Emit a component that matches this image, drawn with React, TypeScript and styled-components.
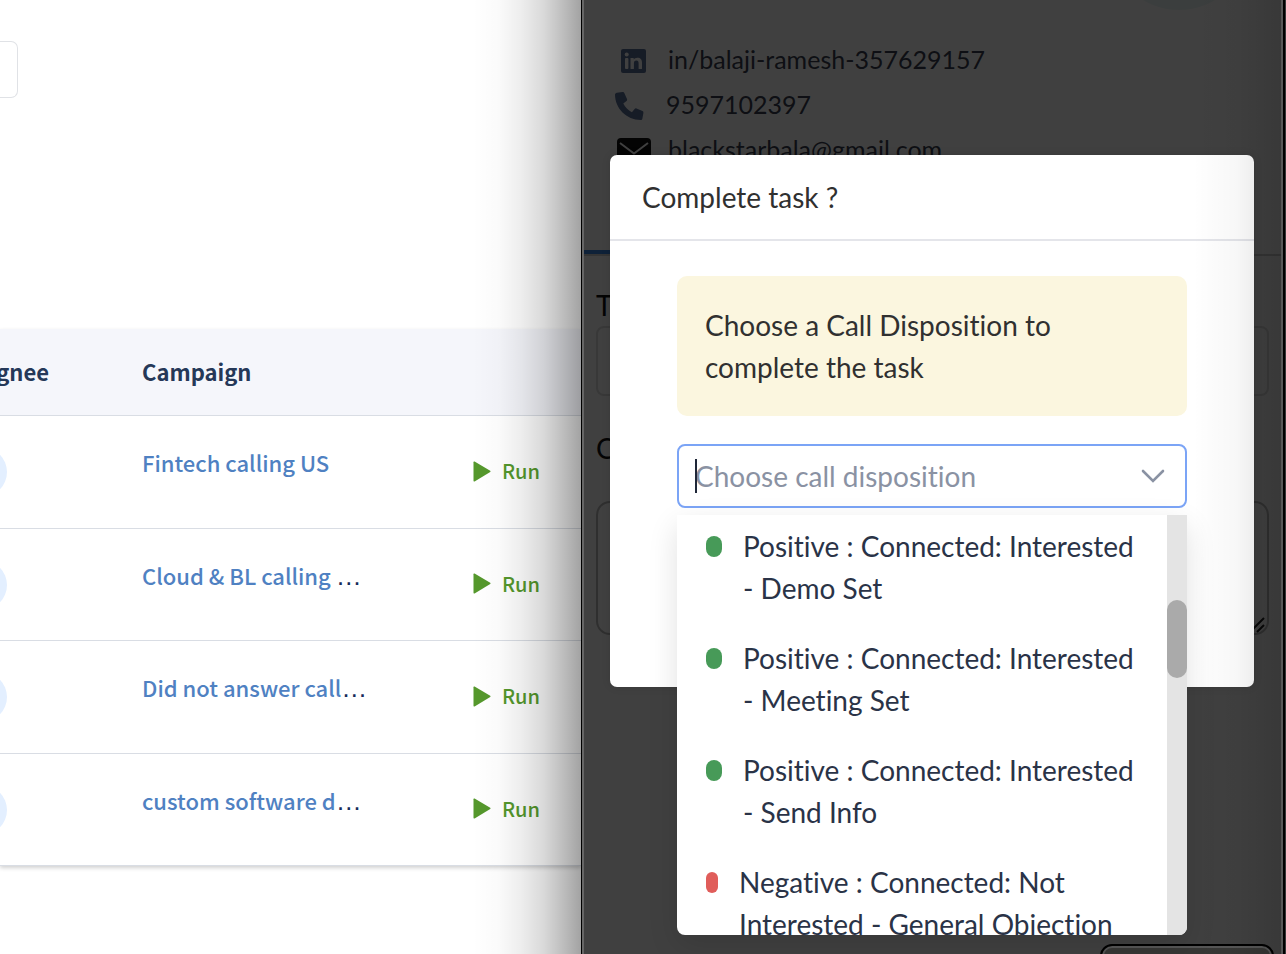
import React from 'react';
import styled, { createGlobalStyle } from 'styled-components';

const GlobalStyle = createGlobalStyle`
  * { box-sizing: border-box; }
  body { margin: 0; background: #fff; }
`;

const tableFont = '"Noto Sans CJK SC", "Noto Sans", sans-serif';
const panelFont = 'Lato, sans-serif';

const Page = styled.div`
  display: grid;
  grid-template-columns: minmax(0, 1fr) 702px 3px;
  height: 100vh;
  overflow: hidden;
`;

const Main = styled.main`
  padding-top: 41px;
  font-family: ${tableFont};
`;

const FilterButton = styled.button`
  display: block;
  width: 18px;
  height: 57px;
  margin: 0 0 231px;
  padding: 0;
  border: 1px solid #e0e2e6;
  border-left: 0;
  border-radius: 0 7px 7px 0;
  background: #fff;
`;

const TaskTable = styled.table`
  width: 100%;
  height: 537px;
  table-layout: fixed;
  border-collapse: separate;
  border-spacing: 0;
  box-shadow: 0 2px 4px rgba(0, 0, 0, 0.18);
`;

const HeadCell = styled.th<{ $width?: number }>`
  width: ${(p) => (p.$width ? `${p.$width}px` : 'auto')};
  height: 87px;
  padding: 0 0 2px;
  border-bottom: 1px solid #d9dde4;
  background: #f5f6fb;
  color: #253858;
  font-size: 22px;
  font-weight: 700;
  line-height: 32px;
  text-align: left;
`;

const Cell = styled.td`
  padding: 0;
  border-bottom: 1px solid #d9dde4;
  background: #fff;
  vertical-align: top;
`;

const CutLeft = styled.div<{ $width: number }>`
  display: flex;
  justify-content: flex-end;
  width: ${(p) => p.$width}px;
  overflow: hidden;
`;

const Avatar = styled.span`
  flex: none;
  width: 50px;
  height: 50px;
  margin-top: 31px;
  border-radius: 50%;
  background: #e3efff;
`;

const CampaignLink = styled.a`
  display: block;
  margin-top: 30px;
  color: #4f81c2;
  font-size: 22px;
  font-weight: 500;
  line-height: 32px;
  text-decoration: none;
  white-space: nowrap;
`;

const Ellipsis = styled.span`
  color: #172b5a;
  font-family: 'Liberation Sans', sans-serif;
  font-size: 26px;
`;

const RunButton = styled.button`
  display: flex;
  align-items: center;
  gap: 11px;
  margin: 39px 0 0;
  padding: 0;
  border: 0;
  background: none;
  color: #55982c;
  font-family: ${tableFont};
  font-size: 20px;
  font-weight: 500;
  line-height: 32px;
`;

const Panel = styled.aside`
  position: relative;
  border-left: 1px solid #000;
  background: #fff;
  font-family: ${panelFont};
  font-variant-ligatures: none;
`;

const CastShadow = styled.div`
  position: absolute;
  top: 0;
  bottom: 0;
  right: 100%;
  width: 110px;
  background: linear-gradient(
    to right,
    rgba(0, 0, 0, 0),
    rgba(0, 0, 0, 0.02) 25%,
    rgba(0, 0, 0, 0.07) 45%,
    rgba(0, 0, 0, 0.15) 65%,
    rgba(0, 0, 0, 0.27) 85%,
    rgba(0, 0, 0, 0.37)
  );
  pointer-events: none;
`;

const Contacts = styled.ul`
  display: flex;
  flex-direction: column;
  gap: 11px;
  height: 256px;
  margin: 0;
  padding: 42px 0 0 33px;
  border-bottom: 2px solid #d0d0d0;
  list-style: none;
`;

const Contact = styled.li`
  display: flex;
  align-items: center;
  gap: 16px;
  height: 34px;
  color: #3a3f50;
  font-size: 25px;
  line-height: 34px;

  svg {
    flex: none;
    margin-top: 4px;
  }
`;

const ContactLink = styled.a`
  color: inherit;
  text-decoration: none;
`;

const ActiveTab = styled.div`
  width: 190px;
  height: 4px;
  margin-top: -6px;
  background: #3b82e0;
`;

const Field = styled.label`
  display: block;
  padding: 0 14px;
  color: #111;
  font-size: 28px;
  line-height: 42px;
`;

const NoteForm = styled.form`
  display: grid;
  gap: 31px;
  padding-top: 30px;
`;

const TitleInput = styled.input`
  display: block;
  width: 100%;
  height: 70px;
  border: 2px solid #ddd;
  border-radius: 8px;
  background: #fff;
`;

const NoteArea = styled.textarea`
  display: block;
  width: 100%;
  height: 134px;
  margin-top: 32px;
  border: 2px solid #bbb;
  border-radius: 14px;
  background: #fff;
  resize: none;
`;

const ResizeMark = styled.svg`
  position: absolute;
  top: 615px;
  right: 18px;
`;

const ProfileCircle = styled.div`
  position: absolute;
  top: -130px;
  right: 34px;
  width: 140px;
  height: 140px;
  border-radius: 50%;
  background: #ecf8f6;
`;

const Backdrop = styled.div`
  position: absolute;
  inset: 0;
  background: rgba(0, 0, 0, 0.75);
  box-shadow: inset 2px 0 0 #666;
`;

const EdgeShade = styled.div`
  position: absolute;
  inset: 0 0 0 auto;
  width: 90px;
  border-right: 2px solid #585858;
  background: linear-gradient(to right, rgba(0, 0, 0, 0), rgba(0, 0, 0, 0.03) 50%, rgba(0, 0, 0, 0.12));
  pointer-events: none;
`;

const RightEdge = styled.div`
  position: relative;
  border-left: 2px solid #000;
  background: #383838;
`;

const Dialog = styled.section`
  position: absolute;
  top: 155px;
  left: 28px;
  right: 29px;
  height: 532px;
  border-radius: 7px;
  background: #fff;
  box-shadow: 0 0 8px rgba(0, 0, 0, 0.12);
  color: #303030;
  font-size: 28px;
  line-height: 42px;
`;

const DialogTitle = styled.h2`
  margin: 0;
  padding: 21px 32px;
  border-bottom: 2px solid #e4e5ea;
  font-size: 28px;
  font-weight: 400;
  line-height: 42px;
`;

const DialogBody = styled.div`
  display: grid;
  gap: 28px;
  padding: 35px 67px;
`;

const Notice = styled.p`
  margin: 0;
  padding: 28px;
  border-radius: 10px;
  background: #fbf6df;
`;

const Combo = styled.div`
  position: relative;
  display: flex;
  align-items: center;
  height: 64px;
  padding: 0 20px 0 16px;
  border: 2px solid #7ba4f6;
  border-radius: 8px;
  background: #fff;
`;

const ComboInput = styled.input`
  flex: 1;
  min-width: 0;
  padding: 0;
  border: 0;
  outline: 0;
  background: none;
  color: #2d3748;
  font-family: ${panelFont};
  font-size: 28px;
  line-height: 42px;
  font-variant-ligatures: none;

  &::placeholder { color: #8a92a3; opacity: 1; }
`;

const Caret = styled.span`
  position: absolute;
  top: 13px;
  left: 16px;
  width: 2px;
  height: 34px;
  background: #1f2738;
`;

const Menu = styled.div`
  position: absolute;
  top: 69px;
  left: -2px;
  right: -2px;
  display: flex;
  height: 420px;
  overflow: hidden;
  border-radius: 0 0 8px 8px;
  background: #fff;
`;

const MenuShadow = styled.div`
  position: absolute;
  top: 69px;
  left: -2px;
  right: -2px;
  height: 420px;
  border-radius: 8px;
  box-shadow: 0 10px 30px rgba(0, 0, 0, 0.12);
`;

const Options = styled.ul`
  display: flex;
  flex: 1;
  flex-direction: column;
  gap: 28px;
  margin: 0;
  padding: 10px 28px;
  list-style: none;
`;

const Option = styled.li`
  display: flex;
  flex: none;
  gap: 21px;
  color: #2a3347;
`;

const Dot = styled.span<{ $tone: 'good' | 'bad' }>`
  flex: none;
  width: ${(p) => (p.$tone === 'good' ? 16 : 12)}px;
  height: 21px;
  margin: 11px 0 0 1px;
  border-radius: 8px;
  background: ${(p) => (p.$tone === 'good' ? '#479a58' : '#e05d5a')};
`;

const ScrollTrack = styled.div`
  flex: none;
  width: 20px;
  padding-top: 85px;
  background: #e4e4e4;
`;

const ScrollThumb = styled.div`
  height: 78px;
  border-radius: 10px;
  background: #aaa;
`;

const CornerButton = styled.button`
  position: absolute;
  top: 944px;
  right: 9px;
  width: 174px;
  height: 60px;
  border: 2px solid #000;
  border-radius: 12px;
  background: #373735;
  box-shadow: inset 0 0 0 2px #565656;
`;

const campaigns = [
  { name: 'Fintech calling US', cut: false },
  { name: 'Cloud & BL calling ', cut: true },
  { name: 'Did not answer call', cut: true },
  { name: 'custom software d', cut: true },
];

const dispositions: { text: string; tone: 'good' | 'bad' }[] = [
  { text: 'Positive : Connected: Interested - Demo Set', tone: 'good' },
  { text: 'Positive : Connected: Interested - Meeting Set', tone: 'good' },
  { text: 'Positive : Connected: Interested - Send Info', tone: 'good' },
  { text: 'Negative : Connected: Not Interested - General Objection', tone: 'bad' },
];

export default function App() {
  return (
    <>
      <GlobalStyle />
      <Page>
        <Main>
          <FilterButton type="button" />
          <TaskTable>
            <thead>
              <tr>
                <HeadCell $width={142}>
                  <CutLeft $width={49}>Assignee</CutLeft>
                </HeadCell>
                <HeadCell $width={331}>Campaign</HeadCell>
                <HeadCell />
              </tr>
            </thead>
            <tbody>
              {campaigns.map((c) => (
                <tr key={c.name}>
                  <Cell>
                    <CutLeft $width={7}>
                      <Avatar />
                    </CutLeft>
                  </Cell>
                  <Cell>
                    <CampaignLink href="#">
                      {c.name}
                      {c.cut && <Ellipsis>…</Ellipsis>}
                    </CampaignLink>
                  </Cell>
                  <Cell>
                    <RunButton type="button">
                      <svg width="18" height="21" viewBox="0 0 18 21" fill="currentColor">
                        <path d="M0.5 1.2Q0.5 0 1.6 0.6L17.2 9.8Q18 10.4 17.2 11L1.6 20.4Q0.5 21 0.5 19.8Z" />
                      </svg>
                      Run
                    </RunButton>
                  </Cell>
                </tr>
              ))}
            </tbody>
          </TaskTable>
        </Main>

        <Panel>
          <CastShadow />
          <ProfileCircle />
          <Contacts>
            <Contact>
              <svg width="37" height="26" viewBox="0 0 37 26">
                <rect x="6" y="1" width="25" height="24" rx="2" fill="#5a7096" />
                <g fill="#fff">
                  <rect x="10" y="10" width="3.4" height="11" rx="1" />
                  <circle cx="11.7" cy="6.500" r="2" />
                  <path d="M15.500 10h3.200v1.600c.7-1.200 2-1.900 3.600-1.900 3.400 0 4.700 2 4.700 5V20.500q0 .5-.5.5H24q-.4 0-.4-.5v-5.100c0-1.700-.4-2.900-2.200-2.900-1.900 0-2.500 1.300-2.500 2.900V20.500q0 .5-.5.5H16q-.5 0-.5-.5z" />
                </g>
              </svg>
              <ContactLink href="#">in/balaji-ramesh-357629157</ContactLink>
            </Contact>
            <Contact>
              <svg width="35" height="28" viewBox="0 0 35 28">
                <path
                  d="M1.800.8 7.500 0c.8-.1 1.500.3 1.800 1l2.700 6c.3.700.1 1.400-.5 1.900L8.300 11.600c2 4 4.700 6.700 8.600 8.600l2.700-3.300c.5-.6 1.200-.8 1.900-.5l6 2.700c.7.300 1 1 .9 1.800l-1 5.500c-.2.900-.8 1.600-1.700 1.600C11.500 28 0 16.500 0 2.600c0-.9.800-1.600 1.800-1.800z"
                  fill="#5a7096"
                />
              </svg>
              <ContactLink href="#">9597102397</ContactLink>
            </Contact>
            <Contact>
              <svg width="37" height="27" viewBox="0 0 37 27">
                <rect x="2" width="34" height="27" rx="4" fill="#111" />
                <path d="M5 5l14 10.500L33 5" fill="none" stroke="#fff" strokeWidth="2" />
              </svg>
              <ContactLink href="#">blackstarbala@gmail.com</ContactLink>
            </Contact>
          </Contacts>
          <ActiveTab />
          <NoteForm>
            <Field>
              T
              <TitleInput type="text" />
            </Field>
            <Field>
              C
              <NoteArea />
            </Field>
          </NoteForm>
          <ResizeMark width="12" height="18" viewBox="0 0 12 18" stroke="#222" strokeWidth="2">
            <path d="M0 14L11 3M4 17L11 10" />
          </ResizeMark>
          <Backdrop />
          <CornerButton type="button" />
          <Dialog role="dialog" aria-labelledby="dialog-title">
            <DialogTitle id="dialog-title">Complete task ?</DialogTitle>
            <DialogBody>
              <Notice>Choose a Call Disposition to complete the task</Notice>
              <Combo>
                <MenuShadow />
                <ComboInput
                  type="text"
                  role="combobox"
                  aria-expanded="true"
                  aria-controls="dispositions"
                  aria-label="Choose call disposition"
                  placeholder="Choose call disposition"
                />
                <Caret />
                <svg width="24" height="16" viewBox="0 0 24 16" fill="none" stroke="#8a92a3" strokeWidth="2.6">
                  <path d="M2 3L12 13 22 3" strokeLinecap="round" />
                </svg>
                <Menu>
                  <Options id="dispositions" role="listbox">
                    {dispositions.map((d) => (
                      <Option key={d.text} role="option" aria-selected="false">
                        <Dot $tone={d.tone} />
                        <span>{d.text}</span>
                      </Option>
                    ))}
                  </Options>
                  <ScrollTrack>
                    <ScrollThumb />
                  </ScrollTrack>
                </Menu>
              </Combo>
            </DialogBody>
          </Dialog>
          <EdgeShade />
        </Panel>
        <RightEdge />
      </Page>
    </>
  );
}
